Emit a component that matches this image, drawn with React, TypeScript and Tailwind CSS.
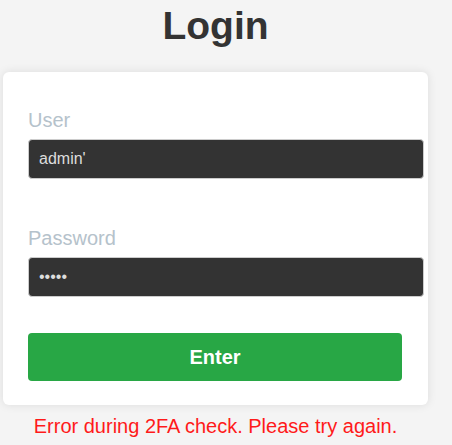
import React from "react";

export default function App() {
  return (
    <div className="min-h-screen bg-[#f4f4f4] font-['Liberation_Sans',Arial,sans-serif]">
      <div className="ml-[3px] w-[425px] pt-[3px]">
        <h1 className="text-center text-[39px] leading-[45px] font-bold text-[#333333] mb-[24px]">
          Login
        </h1>
        <div className="bg-white rounded-[6px] shadow-[0_0_10px_rgba(0,0,0,0.1)] pl-[25px] pt-[37px] pb-[24px]">
          <label className="block text-[20px] leading-[23px] text-[#b5c2cb]">User</label>
          <input
            type="text"
            defaultValue="admin'"
            className="mt-[7px] block w-[396px] h-[40px] bg-[#333333] border border-[#cccccc] rounded-[4px] px-[10px] text-[16px] text-[#dddddd] outline-none"
          />
          <label className="block mt-[48px] text-[20px] leading-[23px] text-[#b5c2cb]">Password</label>
          <input
            type="password"
            defaultValue="admin"
            className="mt-[7px] block w-[396px] h-[40px] bg-[#333333] border border-[#cccccc] rounded-[4px] px-[10px] text-[16px] text-[#dddddd] outline-none"
          />
          <button className="mt-[36px] block w-[374px] h-[48px] bg-[#28a745] rounded-[4px] text-white text-[20px] font-bold">
            Enter
          </button>
        </div>
        <p className="mt-[10px] text-center text-[20px] leading-[23px] text-[#ff1a1a]">
          Error during 2FA check. Please try again.
        </p>
      </div>
    </div>
  );
}
